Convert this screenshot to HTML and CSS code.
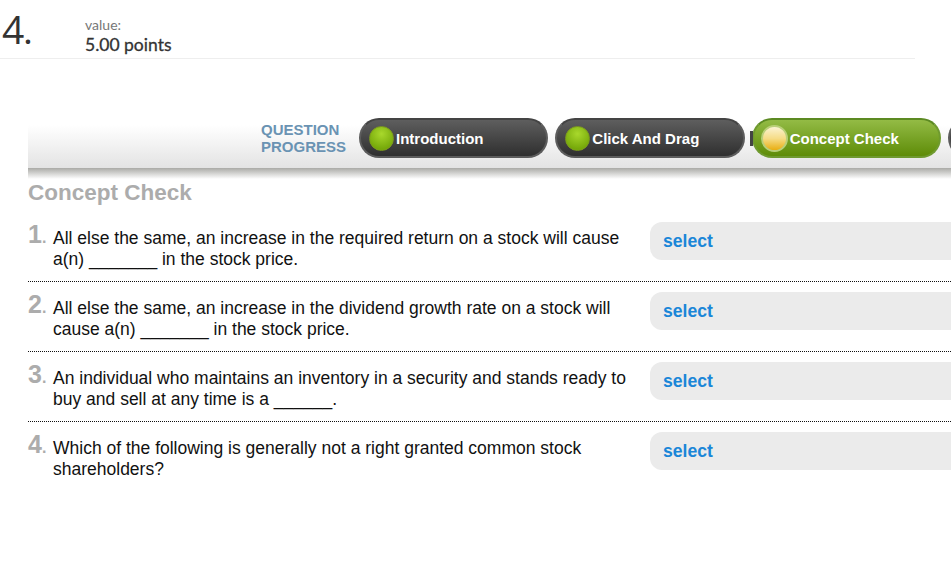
FILE: index.html
```html
<!DOCTYPE html>
<html lang="en">
<head>
    <meta charset="UTF-8">
    <title>Concept Check</title>
    <link rel="stylesheet" href="styles.css">
</head>
<body>
    <div class="question-header">
        <div class="question-number">4<span class="question-dot">.</span></div>
        <div class="question-value">
            <div class="value-label">value:</div>
            <div class="value-points">5.00 points</div>
        </div>
    </div>

    <div class="progress-bar">
        <div class="progress-label">QUESTION<br>PROGRESS</div>
        <div class="pill"><span class="light"></span>Introduction</div>
        <div class="pill"><span class="light"></span>Click And Drag</div>
        <div class="pill pill-active"><span class="light light-active"></span>Concept Check</div>
        <div class="pill pill-next"><span class="light"></span></div>
    </div>

    <h2 class="section-title">Concept Check</h2>

    <div class="questions">
        <div class="row">
            <div class="row-number">1<span class="row-dot">.</span></div>
            <div class="row-text">All else the same, an increase in the required return on a stock will cause a(n) _______ in the stock price.</div>
            <div class="select-box">select</div>
        </div>
        <div class="row">
            <div class="row-number">2<span class="row-dot">.</span></div>
            <div class="row-text">All else the same, an increase in the dividend growth rate on a stock will cause a(n) _______ in the stock price.</div>
            <div class="select-box">select</div>
        </div>
        <div class="row">
            <div class="row-number">3<span class="row-dot">.</span></div>
            <div class="row-text">An individual who maintains an inventory in a security and stands ready to buy and sell at any time is a ______.</div>
            <div class="select-box">select</div>
        </div>
        <div class="row">
            <div class="row-number">4<span class="row-dot">.</span></div>
            <div class="row-text">Which of the following is generally not a right granted common stock shareholders?</div>
            <div class="select-box">select</div>
        </div>
    </div>
</body>
</html>
```

FILE: styles.css
```css
html, body {
    margin: 0;
    padding: 0;
    height: 573px;
    overflow: hidden;
    background: #fff;
}
body {
    width: 951px;
    font-family: "Liberation Sans", Arial, sans-serif;
    color: #111;
}
.question-header {
    display: flex;
    width: 915px;
    height: 58px;
    border-bottom: 1px solid #eee;
}
.question-number {
    width: 85px;
    padding: 8px 0 0 2px;
    box-sizing: border-box;
    font-family: "Open Sans", sans-serif;
    font-size: 39px;
    line-height: 42px;
    color: #333;
}
.question-dot {
    font-size: 26px;
    font-weight: bold;
}
.question-value {
    padding-top: 17px;
    font-family: Lato, sans-serif;
}
.value-label {
    font-size: 14px;
    line-height: 15px;
    color: #777;
}
.value-points {
    margin-top: 3px;
    font-size: 17.5px;
    line-height: 20px;
    -webkit-text-stroke: 0.3px #333;
    color: #333;
}
.progress-bar {
    position: relative;
    display: flex;
    align-items: flex-start;
    gap: 7px;
    height: 43px;
    margin: 66px 0 0 28px;
    padding-left: 233px;
    background: linear-gradient(#fff, #e3e3e3);
}
.progress-bar::after {
    content: "";
    position: absolute;
    left: 0;
    right: 0;
    top: 100%;
    height: 11px;
    background: linear-gradient(#aaaaa6, #fff);
}
.progress-label {
    width: 84px;
    flex: none;
    margin: -4px 7px 0 0;
    font-size: 15px;
    line-height: 17px;
    font-weight: bold;
    color: #6a93b3;
}
.pill {
    display: flex;
    align-items: center;
    flex: none;
    width: 189.33px;
    height: 40px;
    margin-top: -7px;
    padding-left: 8px;
    box-sizing: border-box;
    border: 2px solid #5c5c5c;
    border-top-color: #444;
    border-radius: 20px;
    background: linear-gradient(#5e5e5e, #2f2f2f);
    font-size: 15px;
    font-weight: bold;
    color: #fff;
}
.pill-active {
    position: relative;
    border-color: #6f9a2f;
    border-top-color: #5c8a22;
    background: linear-gradient(#93bb45, #5e8c08);
}
.pill-active::before {
    content: "";
    position: absolute;
    left: -4px;
    top: 11px;
    width: 3px;
    height: 15px;
    background: #444;
}
.light {
    flex: none;
    width: 25px;
    height: 25px;
    margin-right: 2px;
    border-radius: 50%;
    border: 1px solid #7d9c1c;
    box-sizing: border-box;
    background: radial-gradient(circle at 50% 30%, #a9d82c, #76a90a 75%);
}
.light-active {
    width: 27px;
    height: 27px;
    margin-left: -1px;
    margin-right: 2px;
    border: 2px solid #b9cf78;
    background: linear-gradient(#fbf3d2, #f6dc86 50%, #e8ae12);
}
.section-title {
    margin: 12px 0 0 28px;
    font-size: 22.5px;
    line-height: 26px;
    font-weight: bold;
    color: #acacac;
}
.questions {
    margin-top: 6px;
    margin-left: 28px;
}
.row {
    display: flex;
    align-items: flex-start;
    height: 70px;
    box-sizing: border-box;
    border-bottom: 1px dotted #111;
}
.row:last-child {
    border-bottom: none;
}
.row-number {
    width: 25px;
    flex: none;
    margin-top: 8px;
    font-size: 25px;
    line-height: 28px;
    font-weight: bold;
    color: #acacac;
}
.row-dot {
    font-size: 16px;
}
.row-text {
    width: 597px;
    flex: none;
    margin-top: 16px;
    font-size: 17.5px;
    line-height: 21px;
}
.select-box {
    flex: none;
    width: 301px;
    height: 38px;
    margin-top: 10px;
    padding-left: 13px;
    box-sizing: border-box;
    border-radius: 12px 0 0 12px;
    background: #ebebeb;
    font-size: 17.6px;
    line-height: 38px;
    font-weight: bold;
    color: #1a86d8;
}
```
